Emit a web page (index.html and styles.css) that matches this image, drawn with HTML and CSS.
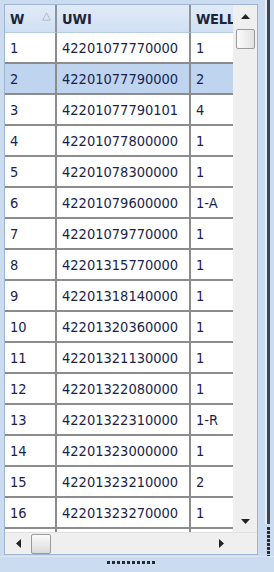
FILE: index.html
```html
<!DOCTYPE html>
<html>
<head>
<meta charset="utf-8">
<link rel="stylesheet" href="styles.css">
</head>
<body>
<div class="window">
  <div class="body-row">
    <div class="grid-box">
      <div class="grid-top">
        <div class="table-wrap">
          <table class="grid">
            <colgroup><col class="c1"><col class="c2"><col class="c3"></colgroup>
            <thead>
              <tr>
                <th class="h-w"><span>W</span><svg class="sort" width="9" height="9" viewBox="0 0 9 9"><polygon points="4.5,0.8 8.3,8.2 0.7,8.2" fill="none" stroke="#b4bcc8" stroke-width="1"/></svg></th>
                <th>UWI</th>
                <th class="h-well">WELL</th>
              </tr>
            </thead>
            <tbody>
              <tr><td>1</td><td>42201077770000</td><td>1</td></tr>
              <tr class="sel"><td>2</td><td>42201077790000</td><td>2</td></tr>
              <tr><td>3</td><td>42201077790101</td><td>4</td></tr>
              <tr><td>4</td><td>42201077800000</td><td>1</td></tr>
              <tr><td>5</td><td>42201078300000</td><td>1</td></tr>
              <tr><td>6</td><td>42201079600000</td><td>1-A</td></tr>
              <tr><td>7</td><td>42201079770000</td><td>1</td></tr>
              <tr><td>8</td><td>42201315770000</td><td>1</td></tr>
              <tr><td>9</td><td>42201318140000</td><td>1</td></tr>
              <tr><td>10</td><td>42201320360000</td><td>1</td></tr>
              <tr><td>11</td><td>42201321130000</td><td>1</td></tr>
              <tr><td>12</td><td>42201322080000</td><td>1</td></tr>
              <tr><td>13</td><td>42201322310000</td><td>1-R</td></tr>
              <tr><td>14</td><td>42201323000000</td><td>1</td></tr>
              <tr><td>15</td><td>42201323210000</td><td>2</td></tr>
              <tr><td>16</td><td>42201323270000</td><td>1</td></tr>
              <tr><td>17</td><td>42201323300000</td><td>1</td></tr>
            </tbody>
          </table>
        </div>
        <div class="vscroll">
          <div class="vbtn"><svg width="9" height="5" viewBox="0 0 9 5"><polygon points="4.5,0 9,5 0,5" fill="#222"/></svg></div>
          <div class="vthumb"></div>
          <div class="track"></div>
          <div class="vbtn"><svg width="9" height="5" viewBox="0 0 9 5"><polygon points="0,0 9,0 4.5,5" fill="#222"/></svg></div>
        </div>
      </div>
      <div class="grid-bottom">
        <div class="hscroll">
          <div class="hbtn left"><svg width="5" height="9" viewBox="0 0 5 9"><polygon points="5,0 5,9 0,4.5" fill="#222"/></svg></div>
          <div class="hthumb"></div>
          <div class="track"></div>
          <div class="hbtn right"><svg width="5" height="9" viewBox="0 0 5 9"><polygon points="0,0 5,4.5 0,9" fill="#222"/></svg></div>
        </div>
        <div class="corner"></div>
      </div>
    </div>
    <div class="right-strip">
      <div class="split-line"></div>
      <div class="vgrip"></div>
    </div>
  </div>
  <div class="bottom-strip">
    <div class="hgrip"></div>
  </div>
</div>
</body>
</html>
```
FILE: styles.css
```css
html, body {
  margin: 0;
  padding: 0;
  background: #cbdcf1;
}
.window {
  width: 274px;
  height: 572px;
  display: flex;
  flex-direction: column;
  background: #cbdcf1;
  font-family: "DejaVu Sans Condensed", "DejaVu Sans", sans-serif;
  overflow: hidden;
}
.body-row {
  height: 556px;
  display: flex;
  padding: 4px 0 0 4px;
  box-sizing: border-box;
}
.grid-box {
  width: 254px;
  height: 551px;
  border: 1px solid #9fb5d1;
  box-sizing: border-box;
  display: flex;
  flex-direction: column;
  background: #ffffff;
}
.grid-top {
  height: 527px;
  display: flex;
}
.table-wrap {
  width: 228px;
  height: 527px;
  overflow: hidden;
}
.grid {
  border-collapse: separate;
  border-spacing: 0;
  table-layout: fixed;
  width: 248px;
  font-size: 14.5px;
  color: #1b1f4c;
}
.c1 { width: 52px; }
.c2 { width: 134px; }
.c3 { width: 62px; }
.grid th {
  height: 28px;
  padding: 0 0 0 5px;
  text-align: left;
  font-weight: bold;
  color: #1d2438;
  background: linear-gradient(#e1ebf8, #d0e0f3);
  border-right: 2px solid #c4d3e6;
  border-bottom: 1px solid #b7cbe4;
  box-sizing: border-box;
  white-space: nowrap;
  overflow: hidden;
}
.grid th:first-child { border-right-color: #8f949c; }
.grid th:nth-child(2) { border-right-color: #8f949c; }
.grid th.h-well { letter-spacing: -0.3px; }
.h-w {
  position: relative;
}
.sort {
  position: absolute;
  left: 37px;
  top: 7px;
}
.grid td {
  height: 29px;
  padding: 0 0 0 5px;
  border-right: 2px solid #8c8c8c;
  border-bottom: 2px solid #8c8c8c;
  white-space: nowrap;
  overflow: hidden;
  background: #ffffff;
}
.grid tr.sel td {
  background: #bfd4ef;
}
.vscroll {
  width: 24px;
  height: 527px;
  display: flex;
  flex-direction: column;
  align-items: center;
  background: #efefef;
}
.vbtn {
  height: 22px;
  width: 24px;
  display: flex;
  align-items: center;
  justify-content: center;
}
.vthumb {
  width: 19px;
  height: 20px;
  margin-top: 2px;
  box-sizing: border-box;
  border: 1px solid #9a9a9a;
  border-radius: 2px;
  background: linear-gradient(90deg, #fbfbfb, #e2e2e2);
}
.track { flex: 1; }
.grid-bottom {
  height: 22px;
  display: flex;
  background: #efefef;
  border-top: 1px solid #e0e0e0;
}
.hscroll {
  width: 228px;
  display: flex;
  align-items: center;
}
.hbtn {
  width: 24px;
  height: 21px;
  display: flex;
  align-items: center;
  justify-content: center;
}
.hbtn.left { width: 26px; }
.hbtn.right { width: 24px; }
.hthumb {
  width: 20px;
  height: 20px;
  box-sizing: border-box;
  border: 1px solid #9a9a9a;
  border-radius: 2px;
  background: linear-gradient(#fbfbfb, #dadada);
}
.corner { flex: 1; }
.right-strip {
  width: 16px;
  margin-top: -4px;
  display: flex;
  flex-direction: column;
  align-items: flex-end;
  padding-right: 4px;
  box-sizing: border-box;
}
.split-line {
  width: 3px;
  height: 535px;
  background: #3f444c;
  border-left: 2px solid #e6eef8;
}
.vgrip {
  width: 3px;
  height: 30px;
  margin-top: 3px;
  background: repeating-linear-gradient(#2a2a2a 0 3px, transparent 3px 4px);
}
.bottom-strip {
  height: 16px;
  display: flex;
  justify-content: center;
  align-items: flex-start;
  border-top: 1px solid #dde8f6;
  box-sizing: border-box;
}
.hgrip {
  width: 48px;
  height: 3px;
  margin-top: 4px;
  margin-left: -12px;
  background: repeating-linear-gradient(90deg, #2a2a2a 0 3px, transparent 3px 5px);
}
```
